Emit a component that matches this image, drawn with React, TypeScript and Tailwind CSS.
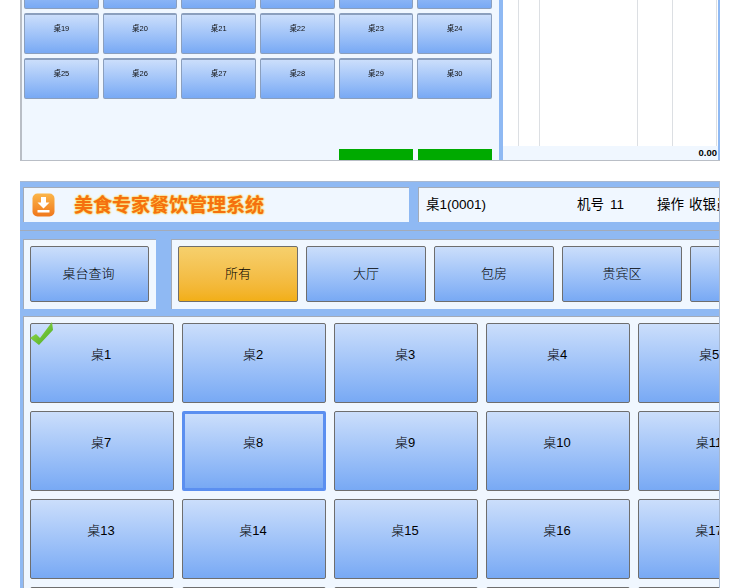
import React from 'react';

const font = { fontFamily: '"Liberation Sans", "Noto Sans CJK SC", sans-serif' };

const smallTables = [
  ['', '', '', '', '', ''],
  ['桌19', '桌20', '桌21', '桌22', '桌23', '桌24'],
  ['桌25', '桌26', '桌27', '桌28', '桌29', '桌30'],
];

const tables = Array.from({ length: 24 }, (_, i) => i + 1);
const areas = ['大厅', '包房', '贵宾区', ''];

const blueBtn = 'bg-gradient-to-b from-[#cbdefb] to-[#78a9f4]';

const DownloadIcon = () => (
  <svg width="23" height="24" viewBox="0 0 23 24" className="shrink-0">
    <defs>
      <linearGradient id="dl" x1="0" y1="0" x2="0" y2="1">
        <stop offset="0" stopColor="#fbb64a" />
        <stop offset="1" stopColor="#f0771c" />
      </linearGradient>
    </defs>
    <rect x="0.5" y="0.5" width="22" height="23" rx="5" fill="url(#dl)" />
    <path d="M9 4h5v5.5h3.5l-6 6-6-6H9z" fill="#fff" />
    <rect x="5.5" y="17" width="12" height="2.5" fill="#fff" />
  </svg>
);

const CheckIcon = () => (
  <svg width="24" height="24" viewBox="0 0 24 24" className="absolute -left-px -top-[2px]">
    <defs>
      <linearGradient id="ck" x1="0" y1="0" x2="1" y2="1">
        <stop offset="0" stopColor="#a4e250" />
        <stop offset="1" stopColor="#45a822" />
      </linearGradient>
    </defs>
    <path d="M0 16L6 12L10 16L22 0L23 8L9 23z" fill="url(#ck)" />
  </svg>
);

export default function App() {
  return (
    <div className="w-[740px] h-[588px] overflow-hidden bg-white pl-5 text-black font-light" style={font}>
      {/* previous screen, bottom part */}
      <div className="w-[700px] h-[161px] flex overflow-hidden border-l-2 border-b border-[#b9bec6] bg-[#f0f7ff]">
        <div className="w-[477px] pl-[2px] flex flex-col justify-end shrink-0">
          <div className="flex flex-col gap-[4px]">
            {smallTables.map((row, r) => (
              <div key={r} className="flex gap-[4px]">
                {row.map((t, i) => (
                  <div
                    key={i}
                    className={`w-[74.67px] h-[41px] shrink-0 rounded-[2px] border border-t-2 border-[#8b9fbd] ${blueBtn} flex justify-center pt-[8px] text-[7.5px] leading-[12px] font-normal text-[#111] blur-[0.25px]`}
                  >
                    {t}
                  </div>
                ))}
              </div>
            ))}
          </div>
          <div className="flex gap-[5px] mt-[50px] pl-[315px]">
            <div className="w-[74px] h-[11px] bg-[#00aa00]" />
            <div className="w-[74px] h-[11px] bg-[#00aa00]" />
          </div>
        </div>
        <div className="w-[4px] bg-[#8fb9f3] shrink-0" />
        <div className="flex-1 flex flex-col bg-white">
          <div className="flex-1 flex">
            <div className="w-[16px] border-r border-[#dcdfe3]" />
            <div className="w-[21px] border-r border-[#dcdfe3]" />
            <div className="w-[98px] border-r border-[#dcdfe3]" />
            <div className="w-[35px] border-r border-[#dcdfe3]" />
            <div className="w-[44px] border-r border-[#dcdfe3]" />
          </div>
          <div className="h-[14px] bg-[#f0f7ff] flex items-center justify-end pr-px text-[9.5px] font-bold leading-none">0.00</div>
        </div>
        <div className="w-[2px] bg-[#8fb9f3]" />
      </div>

      {/* table selection screen */}
      <div className="mt-5 w-[700px] h-[407px] overflow-hidden bg-[#8fb9f3] border-t border-r border-[#a8b8d0] pl-[3px]">
        <div className="h-[49px] pt-[5px] border-b border-[#a3abb8] -ml-[3px] pl-[3px]">
          <div className="flex h-[35px]">
            <div className="w-[386px] bg-[#f0f7ff] border-t border-l border-[#a3abb8] flex items-center pl-[8px]">
              <DownloadIcon />
              <span className="ml-[19px] pt-[2px] text-[19px] font-bold text-[#f5700f] [text-shadow:0_0_2px_#ffd84d,0_0_2px_#ffd84d,0_0_1px_#e0a030] whitespace-nowrap">
                美食专家餐饮管理系统
              </span>
            </div>
            <div className="ml-[9px] flex-1 bg-[#f0f7ff] border-t border-l border-[#a3abb8] flex items-center pl-[7px] text-[13.5px] font-normal whitespace-nowrap overflow-hidden">
              <span className="w-[151px] shrink-0">桌1(0001)</span>
              <span className="w-[80px] shrink-0 flex gap-[6px]">
                <span>机号</span>
                <span>11</span>
              </span>
              <span className="flex gap-[5px]">
                <span>操作</span>
                <span>收银员</span>
              </span>
            </div>
          </div>
        </div>

        <div className="flex mt-2 h-[70px]">
          <div className="w-[133px] bg-[#f0f7ff] border-t border-l border-[#a3abb8] flex items-start pt-[6px] pl-[6px] shrink-0">
            <div className={`w-[119px] h-[56px] rounded-[2px] border border-[#6e6e6e] ${blueBtn} flex items-center justify-center pr-[2px] text-[13px]`}>
              桌台查询
            </div>
          </div>
          <div className="ml-[15px] flex-1 bg-[#f0f7ff] border-t border-l border-[#a3abb8] flex items-start pt-[6px] gap-2 pl-[6px] overflow-hidden">
            <div className="w-[120px] h-[56px] shrink-0 rounded-[2px] border border-[#6e6e6e] bg-gradient-to-b from-[#f6d06c] to-[#f2af15] flex items-center justify-center text-[13px]">
              所有
            </div>
            {areas.map((a, i) => (
              <div
                key={i}
                className={`w-[120px] h-[56px] shrink-0 rounded-[2px] border border-[#6e6e6e] ${blueBtn} flex items-center justify-center text-[13px]`}
              >
                {a}
              </div>
            ))}
          </div>
        </div>

        <div className="mt-[7px] h-[300px] bg-[#f0f7ff] border-t border-l border-[#a3abb8] pl-[6px] pt-[6px] overflow-hidden">
          <div className="grid grid-cols-[repeat(6,144px)] gap-2">
            {tables.map(n => (
              <div
                key={n}
                className={`relative h-20 rounded-[2px] ${
                  n === 8 ? 'border-[3px] border-[#5b8ff0] pt-[19px]' : 'border border-[#6e6e6e] pt-[21px]'
                } ${blueBtn} flex justify-center pr-[2px] text-[13px] leading-5`}
              >
                {n === 1 && <CheckIcon />}
                桌{n}
              </div>
            ))}
          </div>
        </div>
      </div>
    </div>
  );
}
